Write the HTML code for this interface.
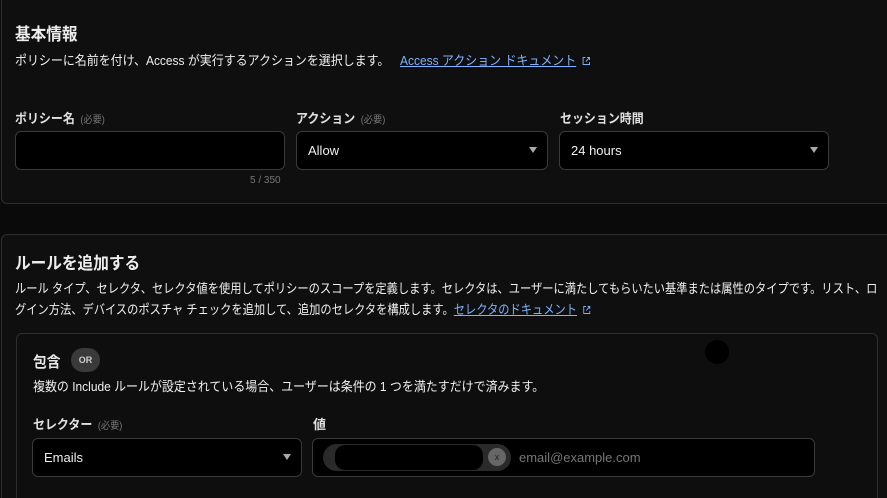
<!DOCTYPE html>
<html><head><meta charset="utf-8"><style>
*{box-sizing:border-box;margin:0;padding:0}
html,body{width:887px;height:498px;overflow:hidden}
body{background:#0a0a0a;font-family:"Liberation Sans","Noto Sans CJK JP",sans-serif;color:#e6e6e6;position:relative}
.card{position:absolute;border:1px solid #2e2e2e;border-radius:6px;background:#0f0f0f}
.wide{width:886px;border-right:none;border-top-right-radius:0;border-bottom-right-radius:0}
.abs{position:absolute;white-space:nowrap}
.sx{transform:scaleX(0.92);transform-origin:0 0}
h2{font-size:17px;font-weight:bold;color:#ededed}
.t{font-size:13px;color:#f0f0f0}
a{color:#7fb2ff;text-decoration:underline}
.lbl{font-size:13px;font-weight:bold;color:#e0e0e0}
.req{font-size:10px;color:#777;font-weight:normal;margin-left:6px}
.in{position:absolute;background:#000;border:1px solid #3a3a3a;border-radius:6px;font-size:13px;color:#f0f0f0;padding-left:11px;line-height:38px}
.arr{position:absolute;right:10px;top:15px;width:0;height:0;border-left:4px solid transparent;border-right:4px solid transparent;border-top:6px solid #aaa}
.ext{display:inline-block;margin-left:6px;vertical-align:-1px}
</style></head><body>
<div class="card wide" style="left:1px;top:-10px;height:214px"></div>
<h2 class="abs sx" style="left:15px;top:20px">基本情報</h2>
<div class="abs t sx" style="left:15px;top:50px">ポリシーに名前を付け、Access が実行するアクションを選択します。 <a style="margin-left:8px">Access アクション ドキュメント</a><svg class="ext" width="10" height="10" viewBox="0 0 10 10" fill="none" stroke="#7fb2ff" stroke-width="1"><path d="M4 1.5H1.5v7h7V6M6 1.5h2.5V4M8.5 1.5L4.5 5.5"/></svg></div>
<div class="abs lbl sx" style="left:15px;top:108px">ポリシー名<span class="req">(必要)</span></div>
<div class="abs lbl sx" style="left:296px;top:108px">アクション<span class="req">(必要)</span></div>
<div class="abs lbl sx" style="left:560px;top:108px">セッション時間</div>
<div class="in" style="left:15px;top:131px;width:270px;height:39px"></div>
<div class="in" style="left:296px;top:131px;width:252px;height:39px">Allow<div class="arr"></div></div>
<div class="in" style="left:559px;top:131px;width:270px;height:39px">24 hours<div class="arr"></div></div>
<div class="abs" style="left:250px;top:175px;font-size:10px;color:#777">5 / 350</div>

<div class="card wide" style="left:1px;top:234px;height:280px"></div>
<h2 class="abs sx" style="left:15px;top:249px">ルールを追加する</h2>
<div class="abs t" style="left:15px;top:278px;line-height:21px;transform:scaleX(0.865);transform-origin:0 0">ルール タイプ、セレクタ、セレクタ値を使用してポリシーのスコープを定義します。セレクタは、ユーザーに満たしてもらいたい基準または属性のタイプです。リスト、ロ<br>グイン方法、デバイスのポスチャ チェックを追加して、追加のセレクタを構成します。<a>セレクタのドキュメント</a><svg class="ext" width="10" height="10" viewBox="0 0 10 10" fill="none" stroke="#7fb2ff" stroke-width="1"><path d="M4 1.5H1.5v7h7V6M6 1.5h2.5V4M8.5 1.5L4.5 5.5"/></svg></div>
<div class="card" style="left:16px;top:333px;width:862px;height:180px;background:#0e0e0e"></div>
<div class="abs" style="left:705px;top:340px;width:24px;height:24px;border-radius:50%;background:#000"></div>
<div class="abs sx" style="left:33px;top:351px;font-size:15px;font-weight:bold">包含</div>
<div class="abs" style="left:71px;top:348px;width:29px;height:24px;border-radius:12px;background:#3a3a3a;color:#ccc;font-size:9px;font-weight:bold;text-align:center;line-height:24px">OR</div>
<div class="abs t sx" style="left:33px;top:376px">複数の Include ルールが設定されている場合、ユーザーは条件の 1 つを満たすだけで済みます。</div>
<div class="abs lbl sx" style="left:33px;top:414px">セレクター<span class="req">(必要)</span></div>
<div class="abs lbl" style="left:313px;top:414px">値</div>
<div class="in" style="left:32px;top:438px;width:270px;height:39px">Emails<div class="arr"></div></div>
<div class="in" style="left:312px;top:438px;width:503px;height:39px;color:#777;padding-left:206px">email@example.com</div>
<div class="abs" style="left:323px;top:444px;width:188px;height:27px;border-radius:14px;background:#2a2a2a"></div>
<div class="abs" style="left:335px;top:445px;width:148px;height:25px;border-radius:10px;background:#000"></div>
<div class="abs" style="left:488px;top:448px;width:18px;height:18px;border-radius:50%;background:#666;color:#222;font-size:9px;text-align:center;line-height:18px">x</div>
</body></html>
